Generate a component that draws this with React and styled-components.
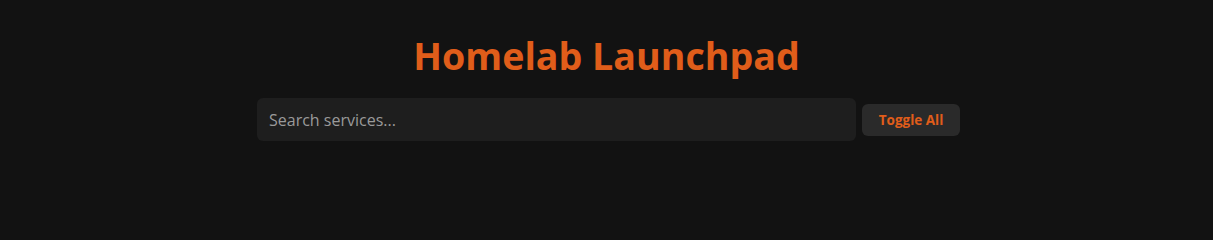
import React from "react";
import styled, { createGlobalStyle } from "styled-components";

const Global = createGlobalStyle`
  html, body { margin: 0; padding: 0; background: #121212; }
  body { font-family: "Open Sans", "Noto Sans", sans-serif; color: #ddd; }
`;

const Page = styled.div`
  display: flex;
  flex-direction: column;
  align-items: center;
  padding-top: 30px;
`;

const Title = styled.h1`
  margin: 0 0 16px;
  font-size: 37.6px;
  line-height: 52px;
  font-weight: 700;
  color: #e05d1a;
`;

const Controls = styled.div`
  display: flex;
  align-items: center;
  gap: 6px;
  margin-left: 4px;
`;

const Search = styled.input`
  width: 599px;
  height: 43px;
  box-sizing: border-box;
  padding: 0 12px;
  background: #1e1e1e;
  border: none;
  border-radius: 6px;
  color: #ddd;
  font-family: inherit;
  font-size: 16px;
  outline: none;
  &::placeholder { color: #9a9a9a; }
`;

const Button = styled.button`
  height: 32px;
  width: 98px;
  box-sizing: border-box;
  background: #2a2a2a;
  border: none;
  border-radius: 6px;
  color: #e05d1a;
  font-family: inherit;
  font-weight: 700;
  font-size: 13.5px;
  cursor: pointer;
`;

export default function App() {
  return (
    <>
      <Global />
      <Page>
        <Title>Homelab Launchpad</Title>
        <Controls>
          <Search placeholder="Search services..." />
          <Button>Toggle All</Button>
        </Controls>
      </Page>
    </>
  );
}
